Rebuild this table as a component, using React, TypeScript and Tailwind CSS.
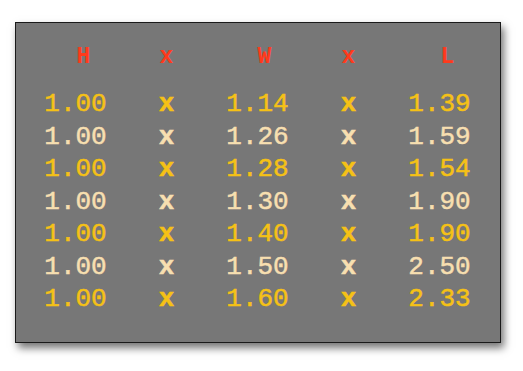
import React from "react";

const rows = [
  ["1.00", "1.14", "1.39"],
  ["1.00", "1.26", "1.59"],
  ["1.00", "1.28", "1.54"],
  ["1.00", "1.30", "1.90"],
  ["1.00", "1.40", "1.90"],
  ["1.00", "1.50", "2.50"],
  ["1.00", "1.60", "2.33"],
];

export default function App() {
  return (
    <div className="w-[523px] h-[371px] bg-white pt-[22px] pl-[15px]">
      <div
        className="w-[486px] h-[321px] bg-[#777777] border border-[#1a1a1a] shadow-[3px_5px_8px_rgba(0,0,0,0.55)] pl-[14px] pt-[22px]"
        style={{ fontFamily: '"Liberation Mono", "Courier New", monospace' }}
      >
        <div className="grid grid-cols-[91px_91px_91px_91px_91px] h-[24px] items-center text-[23px] font-bold text-[#ff3a1c] leading-none">
          <div className="text-center pl-[16px]">H</div>
          <div className="text-center">x</div>
          <div className="text-center pl-[14px]">W</div>
          <div className="text-center">x</div>
          <div className="text-center pl-[16px]">L</div>
        </div>
        <div className="mt-[19px] flex flex-col">
          {rows.map((r, i) => (
            <div
              key={i}
              className={
                "grid grid-cols-[91px_91px_91px_91px_91px] h-[32.5px] items-center text-[26px] leading-none [-webkit-text-stroke:0.5px_currentColor] " +
                (i % 2 === 0 ? "text-[#f5c116]" : "text-[#f7dfb0]")
              }
            >
              <div className="text-center">{r[0]}</div>
              <div className="text-center font-bold">x</div>
              <div className="text-center">{r[1]}</div>
              <div className="text-center font-bold">x</div>
              <div className="text-center">{r[2]}</div>
            </div>
          ))}
        </div>
      </div>
    </div>
  );
}
